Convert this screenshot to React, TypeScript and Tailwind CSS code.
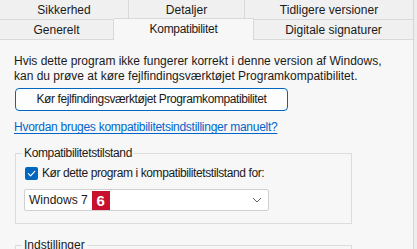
import React from "react";

const font = { fontFamily: '"Liberation Sans", Arial, sans-serif' };

const Tab = ({ label, w, last }: { label: string; w: string; last?: boolean }) => (
  <div
    className={`${w} h-[20px] flex items-center justify-center border-b border-[#d9d9d9] bg-[#f0f0f0] text-[12px] text-[#1a1a1a] ${
      last ? "" : "border-r"
    }`}
  >
    {label}
  </div>
);

const App = () => {
  return (
    <div className="w-[417px] h-[249px] overflow-hidden bg-[#ededed] flex" style={font}>
      <div className="w-[414px] h-full border-r border-[#d6d6d6] flex flex-col">
        {/* tab rows */}
        <div className="flex">
          <Tab label="Sikkerhed" w="w-[129px]" />
          <Tab label="Detaljer" w="w-[116px]" />
          <Tab label="Tidligere versioner" w="w-[168px]" last />
        </div>
        <div className="flex items-end">
          <Tab label="Generelt" w="w-[114px]" />
          <div className="w-[140px] h-[22px] -mt-[2px] relative z-10 flex items-center justify-center border-t border-r border-[#d9d9d9] bg-[#f7f7f7] text-[12px] tracking-[-0.3px] text-[#1a1a1a] pb-[2px]">
            Kompatibilitet
          </div>
          <Tab label="Digitale signaturer" w="w-[159px]" last />
        </div>

        {/* panel body */}
        <div className="flex-1 bg-[#f7f7f7] pl-[14px] pt-[14px] text-[12px] leading-[15px] text-[#1a1a1a]">
          <p>Hvis dette program ikke fungerer korrekt i denne version af Windows,</p>
          <p>kan du prøve at køre fejlfindingsværktøjet Programkompatibilitet.</p>

          <button className="mt-[4px] ml-[1px] w-[273px] h-[23px] rounded-[4px] border border-[#0067c0] bg-[#fdfdfd] text-[12px] tracking-[-0.4px] text-[#1a1a1a] flex items-center justify-center">
            Kør fejlfindingsværktøjet Programkompatibilitet
          </button>

          <a className="mt-[9px] block text-[#0066cc] underline underline-offset-[2px] tracking-[-0.27px]">
            Hvordan bruges kompatibilitetsindstillinger manuelt?
          </a>

          <fieldset className="mt-[11px] ml-[1px] w-[337px] border border-[#dcdcdc] pl-[8px] pb-[12px]">
            <legend className="-ml-[2px] px-[2px] leading-[15px] tracking-[-0.35px]">Kompatibilitetstilstand</legend>
            <div className="mt-[5px] flex items-center gap-[4px] ml-[1px]">
              <span className="w-[13px] h-[13px] rounded-[2px] bg-[#0067c0] flex items-center justify-center">
                <svg width="9" height="9" viewBox="0 0 10 10" fill="none">
                  <path d="M1.5 5.2 L4 7.6 L8.6 2.6" stroke="white" strokeWidth="1.3" strokeLinecap="round" strokeLinejoin="round" />
                </svg>
              </span>
              <span className="tracking-[-0.4px]">Kør dette program i kompatibilitetstilstand for:</span>
            </div>
            <div className="mt-[8px] w-[245px] h-[22px] bg-white border border-[#d0d0d0] rounded-[2px] flex items-center pl-[4px] pr-[6px]">
              <span>Windows 7</span>
              <span className="ml-[4px] w-[18px] h-[19px] bg-[#c8102e] text-white font-bold text-[15px] flex items-center justify-center">
                6
              </span>
              <svg className="ml-auto" width="10" height="6" viewBox="0 0 10 6" fill="none">
                <path d="M1 1 L5 5 L9 1" stroke="#606060" strokeWidth="1" />
              </svg>
            </div>
          </fieldset>

          <fieldset className="mt-[14px] ml-[1px] w-[337px] h-[40px] border border-[#dcdcdc] pl-[8px]">
            <legend className="-ml-[2px] px-[2px] leading-[15px]">Indstillinger</legend>
          </fieldset>
        </div>
      </div>
    </div>
  );
};

export default App;
